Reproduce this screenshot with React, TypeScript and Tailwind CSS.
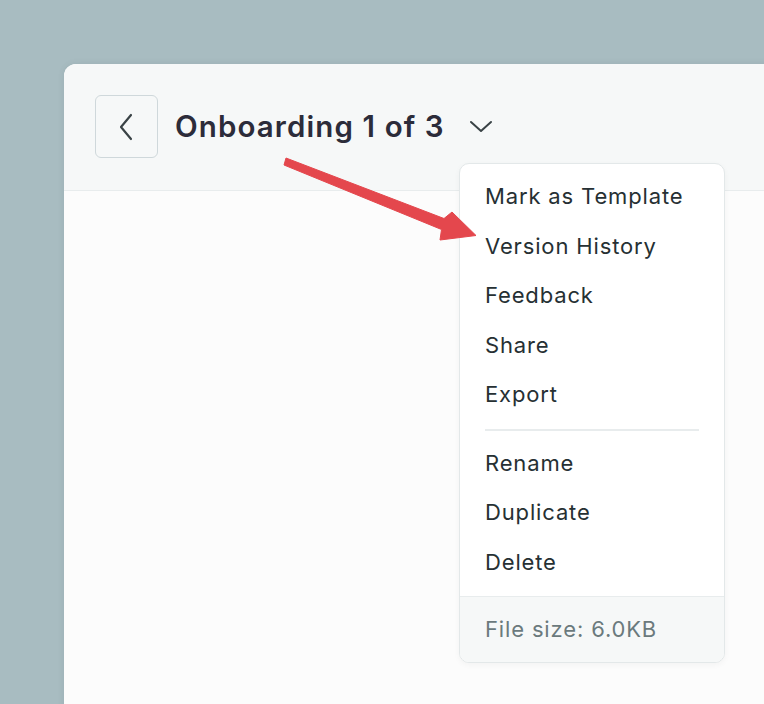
import React from "react";

const items1 = ["Mark as Template", "Version History", "Feedback", "Share", "Export"];
const items2 = ["Rename", "Duplicate", "Delete"];

export default function App() {
  return (
    <div
      className="relative w-[764px] h-[704px] overflow-hidden bg-[#a8bcc1]"
      style={{ fontFamily: "Inter, 'Noto Sans', sans-serif" }}
    >
      <div className="absolute left-[64px] top-[64px] w-[760px] h-[700px] rounded-tl-[12px] overflow-hidden bg-[#fcfcfc] shadow-[0_0_6px_rgba(60,80,90,0.12)]">
        <div className="h-[127px] bg-[#f6f8f8] border-b border-[#e8eced] flex items-start pl-[31px] pt-[31px]">
          <div className="w-[63px] h-[63px] rounded-[6px] border-[1.5px] border-[#cfd8db] flex items-center justify-center">
            <svg width="22" height="30" viewBox="0 0 22 30" fill="none">
              <path d="M15 3 L5 15 L15 27" stroke="#3a4346" strokeWidth="2.2" strokeLinecap="round" strokeLinejoin="round" />
            </svg>
          </div>
          <div className="ml-[17px] h-[63px] flex items-center text-[29.5px] font-semibold text-[#2c2c3a] tracking-[1.1px]">
            Onboarding 1 of 3
          </div>
          <div className="ml-[24px] h-[63px] flex items-center">
            <svg width="24" height="14" viewBox="0 0 24 14" fill="none">
              <path d="M2 2 L12 11 L22 2" stroke="#3a4346" strokeWidth="2" strokeLinecap="round" strokeLinejoin="round" />
            </svg>
          </div>
        </div>
      </div>

      <div className="absolute left-[459px] top-[163px] w-[266px] rounded-[10px] border border-[#e3e8e9] bg-white overflow-hidden shadow-[0_2px_6px_rgba(0,0,0,0.04)]">
        <div className="pt-[8px] pb-[9px]">
          {items1.map((t) => (
            <div key={t} className="h-[49.5px] flex items-center pl-[25px] text-[22px] text-[#263033] tracking-[0.85px]">
              {t}
            </div>
          ))}
          <div className="mx-[25px] mt-[9px] mb-[8px] h-[2px] bg-[#e8eced]" />
          {items2.map((t) => (
            <div key={t} className="h-[49.5px] flex items-center pl-[25px] text-[22px] text-[#263033] tracking-[0.85px]">
              {t}
            </div>
          ))}
        </div>
        <div className="h-[66px] border-t border-[#e8eced] bg-[#f6f8f8] flex items-center pl-[25px] text-[22px] text-[#6b7a7d] tracking-[0.85px]">
          File size: 6.0KB
        </div>
      </div>

      <svg className="absolute left-0 top-0" width="764" height="704" viewBox="0 0 764 704">
        <path
          d="M286 158 L444 218.5 L452 212 L476 235.5 L440 240 L441.5 229.5 L284 165 Z"
          fill="#e4474d"
          stroke="#e4474d"
          strokeWidth="1"
          strokeLinejoin="round"
        />
      </svg>
    </div>
  );
}
